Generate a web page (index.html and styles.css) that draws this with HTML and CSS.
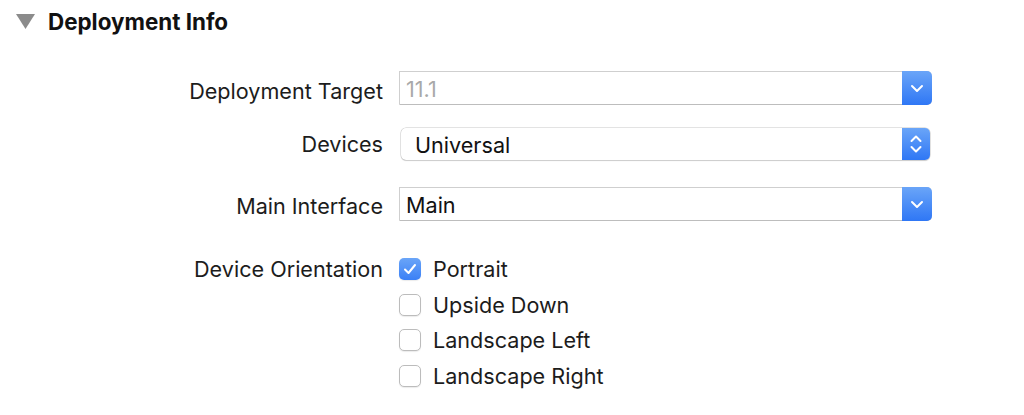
FILE: index.html
```html
<!DOCTYPE html>
<html lang="en">
<head>
    <meta charset="UTF-8">
    <meta name="viewport" content="width=device-width, initial-scale=1.0">
    <title>Deployment Info</title>
    <link rel="stylesheet" href="styles.css">
</head>
<body>

    <div class="secao">
        <svg class="seta" width="19" height="15" viewBox="0 0 19 15"><polygon points="0,0 19,0 9.5,15" fill="#8b8b8b"/></svg>
        <h1>Deployment Info</h1>
    </div>

    <div class="form-info">
        <div class="fila fila-target">
            <label class="rotulo">Deployment Target</label>
            <div class="campo combo">
                <span class="valor cinza">11.1</span>
                <span class="botao-azul">
                    <svg width="14" height="9" viewBox="0 0 14 9"><polyline points="2,2 7,7 12,2" fill="none" stroke="#fff" stroke-width="2" stroke-linecap="round" stroke-linejoin="round"/></svg>
                </span>
            </div>
        </div>

        <div class="fila fila-devices">
            <label class="rotulo">Devices</label>
            <div class="campo popup">
                <span class="valor">Universal</span>
                <span class="botao-azul">
                    <svg width="14" height="20" viewBox="0 0 14 20"><polyline points="2.5,7 7,2.5 11.5,7" fill="none" stroke="#fff" stroke-width="2" stroke-linecap="round" stroke-linejoin="round"/><polyline points="2.5,13 7,17.5 11.5,13" fill="none" stroke="#fff" stroke-width="2" stroke-linecap="round" stroke-linejoin="round"/></svg>
                </span>
            </div>
        </div>

        <div class="fila fila-main">
            <label class="rotulo">Main Interface</label>
            <div class="campo combo">
                <span class="valor">Main</span>
                <span class="botao-azul">
                    <svg width="14" height="9" viewBox="0 0 14 9"><polyline points="2,2 7,7 12,2" fill="none" stroke="#fff" stroke-width="2" stroke-linecap="round" stroke-linejoin="round"/></svg>
                </span>
            </div>
        </div>

        <div class="fila fila-orientacao">
            <label class="rotulo">Device Orientation</label>
            <div class="lista-check">
                <div class="item-check">
                    <span class="caixa marcada">
                        <svg width="14" height="12" viewBox="0 0 14 12"><polyline points="2,6.5 5.5,10 12,2" fill="none" stroke="#fff" stroke-width="2" stroke-linecap="round" stroke-linejoin="round"/></svg>
                    </span>
                    Portrait
                </div>
                <div class="item-check"><span class="caixa"></span>Upside Down</div>
                <div class="item-check"><span class="caixa"></span>Landscape Left</div>
                <div class="item-check"><span class="caixa"></span>Landscape Right</div>
            </div>
        </div>
    </div>

</body>
</html>
```

FILE: styles.css
```css
body {
    margin: 0;
    background-color: #fff;
    color: #1c1c1c;
    font-family: Inter, "Liberation Sans", sans-serif;
    font-size: 21.6px;
}

.secao {
    display: flex;
    align-items: center;
    padding: 8px 0 0 16px;
    height: 26px;
}

.seta {
    margin-right: 13px;
}

.secao h1 {
    margin: 0;
    font-size: 22.4px;
    font-weight: 700;
    color: #111;
}

.form-info {
    display: flex;
    flex-direction: column;
    padding-top: 37px;
}

.fila {
    display: flex;
    align-items: center;
    gap: 16px;
    height: 34px;
}

.fila-devices {
    margin-top: 22px;
    height: 33px;
}

.fila-main {
    margin-top: 27px;
}

.fila-orientacao {
    margin-top: 30px;
    height: auto;
    align-items: flex-start;
}

.rotulo {
    width: 383px;
    text-align: right;
    flex-shrink: 0;
}

.fila-target .rotulo {
    padding-top: 5px;
}

.fila-main .rotulo {
    padding-top: 3px;
}

.fila-orientacao .rotulo {
    line-height: 36px;
}

.campo {
    display: flex;
    align-items: stretch;
    box-sizing: border-box;
    width: 533px;
    height: 34px;
}

.combo {
    border: 1px solid #cfcfcf;
    border-bottom-color: #bdbdbd;
    border-right: none;
    border-radius: 0 5px 5px 0;
}

.popup {
    width: 529px;
    height: 32px;
    margin-left: 2px;
    border-radius: 5px;
    box-shadow: 0 0 0 0.5px #c8c8c8, 0 1px 1px rgba(0, 0, 0, 0.18);
}

.valor {
    flex: 1;
    display: flex;
    align-items: center;
    padding-left: 6px;
    padding-top: 2px;
    color: #111;
}

.popup .valor {
    padding-left: 14px;
}

.cinza {
    color: #a9a9a9;
}

.botao-azul {
    width: 30px;
    display: flex;
    align-items: center;
    justify-content: center;
    background: linear-gradient(#6aa5f8, #2f77f5);
    border-radius: 0 5px 5px 0;
    margin: -1px 0;
}

.popup .botao-azul {
    margin: 0;
    width: 28px;
}

.lista-check {
    display: flex;
    flex-direction: column;
}

.item-check {
    display: flex;
    align-items: center;
    height: 35.7px;
}

.caixa {
    width: 22px;
    height: 22px;
    box-sizing: border-box;
    border: 1px solid #bcbcbc;
    border-radius: 5px;
    box-shadow: 0 1px 1px rgba(0, 0, 0, 0.08);
    margin-right: 12px;
    display: flex;
    align-items: center;
    justify-content: center;
    background-color: #fff;
}

.marcada {
    border: none;
    background: linear-gradient(#6aa5f8, #3b80f6);
}
```
